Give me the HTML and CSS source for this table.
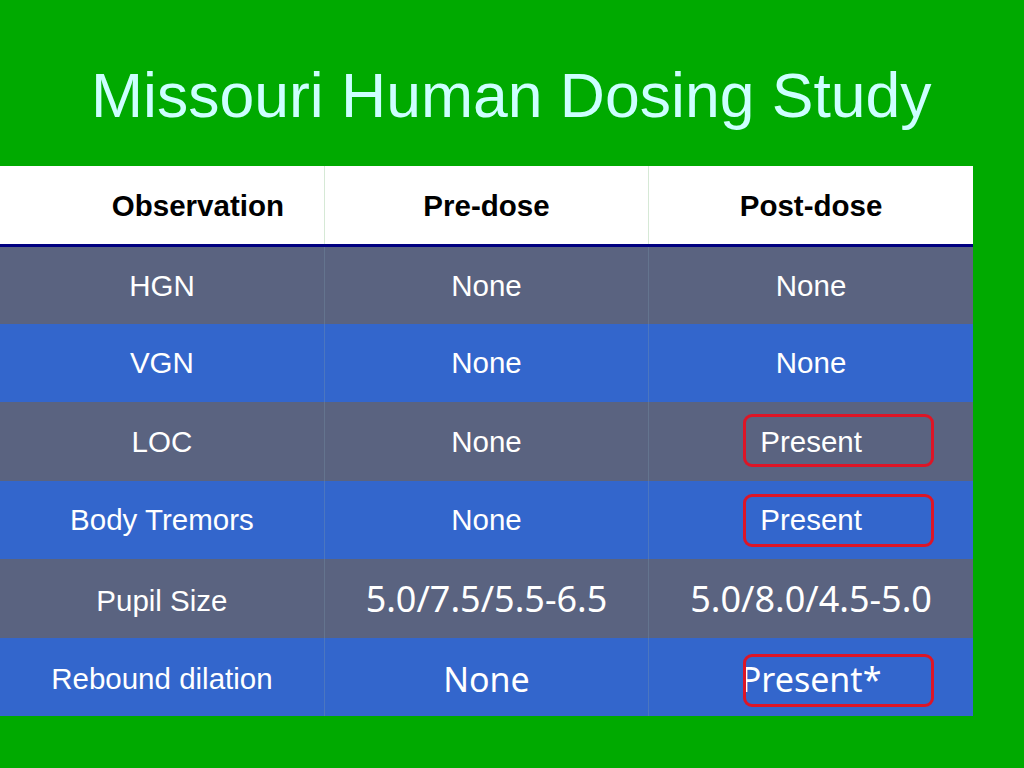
FILE: index.html
```html
<!DOCTYPE html>
<html lang="en">
<head>
<meta charset="utf-8">
<title>Missouri Human Dosing Study</title>
<link rel="stylesheet" href="styles.css">
</head>
<body>
<div class="slide">
  <h1 class="title">Missouri Human Dosing Study</h1>
  <table class="data">
    <thead>
      <tr>
        <th class="obs-head">Observation</th>
        <th>Pre-dose</th>
        <th>Post-dose</th>
      </tr>
    </thead>
    <tbody>
      <tr class="row-gray">
        <td>HGN</td>
        <td>None</td>
        <td>None</td>
      </tr>
      <tr class="row-blue">
        <td>VGN</td>
        <td>None</td>
        <td>None</td>
      </tr>
      <tr class="row-gray">
        <td>LOC</td>
        <td>None</td>
        <td class="marked">Present<span class="ring"></span></td>
      </tr>
      <tr class="row-blue">
        <td>Body Tremors</td>
        <td>None</td>
        <td class="marked">Present<span class="ring ring-mid"></span></td>
      </tr>
      <tr class="row-gray">
        <td class="low">Pupil Size</td>
        <td class="alt">5.0/7.5/5.5-6.5</td>
        <td class="alt">5.0/8.0/4.5-5.0</td>
      </tr>
      <tr class="row-blue">
        <td class="low">Rebound dilation</td>
        <td class="alt alt-last">None</td>
        <td class="alt alt-last marked">Present*<span class="ring ring-last"></span></td>
      </tr>
    </tbody>
  </table>
</div>
</body>
</html>
```
FILE: styles.css
```css
html, body {
  margin: 0;
  padding: 0;
}

body {
  background: #00aa00;
  width: 1024px;
  height: 768px;
  overflow: hidden;
  font-family: "Liberation Sans", Arial, sans-serif;
}

.slide {
  display: flex;
  flex-direction: column;
}

.title {
  margin: 0;
  height: 166px;
  box-sizing: border-box;
  padding: 57px 0 0 91px;
  font-size: 62.5px;
  font-weight: normal;
  line-height: 76px;
  color: #ccffff;
}

.data {
  width: 973px;
  border-collapse: collapse;
  table-layout: fixed;
}

.data th,
.data td {
  width: 324px;
  padding: 0;
  text-align: center;
  vertical-align: middle;
  font-size: 29.5px;
  line-height: 34px;
  box-sizing: border-box;
}

.data th {
  background: #ffffff;
  color: #000000;
  font-weight: bold;
  height: 79px;
  border-bottom: 3px solid #000080;
  padding-top: 2px;
}

.data th + th {
  border-left: 1px solid #d6e9d6;
}

.data th.obs-head {
  padding-left: 72px;
}

.data td {
  color: #ffffff;
  height: 78.5px;
  padding-top: 1px;
}

.data td.low {
  padding-top: 5px;
}

.data td + td {
  border-left: 1px solid rgba(120, 150, 170, 0.35);
}

.row-gray td {
  background: #5a6380;
}

.row-blue td {
  background: #3366cc;
}

.data td.alt {
  font-family: "Noto Sans", "Open Sans", sans-serif;
  font-size: 36px;
  line-height: 40px;
  padding-top: 2px;
}

.data td.alt-last {
  font-size: 34px;
  padding-top: 4px;
}

.marked {
  position: relative;
}

.ring {
  position: absolute;
  left: 94px;
  top: 12px;
  width: 191px;
  height: 53px;
  box-sizing: border-box;
  border: 3px solid #dd1526;
  border-radius: 9px;
}

.ring-mid {
  top: 13px;
}

.ring-last {
  top: 16px;
}
```
